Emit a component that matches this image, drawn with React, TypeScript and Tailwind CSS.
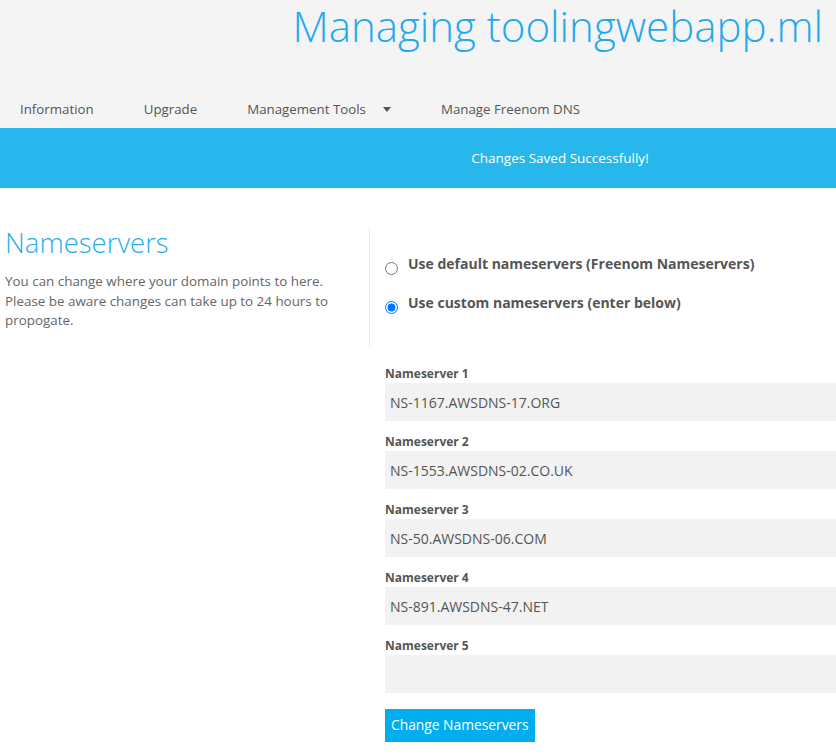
import React from "react";

const fields = [
  { label: "Nameserver 1", value: "NS-1167.AWSDNS-17.ORG" },
  { label: "Nameserver 2", value: "NS-1553.AWSDNS-02.CO.UK" },
  { label: "Nameserver 3", value: "NS-50.AWSDNS-06.COM" },
  { label: "Nameserver 4", value: "NS-891.AWSDNS-47.NET" },
  { label: "Nameserver 5", value: "" },
];

export default function App() {
  return (
    <div className="min-h-[756px] bg-white font-['Open_Sans',sans-serif] text-[#555]">
      <header className="bg-[#f4f4f4] h-[128px] overflow-hidden">
        <h1 className="text-right pr-[13px] text-[42px] leading-[52px] font-light text-[#1fa9ef]">
          Managing toolingwebapp.ml
        </h1>
        <nav className="mt-[39px] h-[37px] flex items-center pl-[20px] gap-[50px] text-[13.3px] text-[#555]">
          <span>Information</span>
          <span>Upgrade</span>
          <span className="flex items-center">
            Management Tools
            <svg className="ml-[17px]" width="8" height="5" viewBox="0 0 8 5">
              <path d="M0 0 L8 0 L4 5 Z" fill="#555" />
            </svg>
          </span>
          <span>Manage Freenom DNS</span>
        </nav>
      </header>
      <div className="h-[60px] bg-[#27b7ed] flex items-center justify-center pl-[284px] text-white text-[13.5px]">
        Changes Saved Successfully!
      </div>
      <div className="flex mt-[35px]">
        <div className="w-[369px] shrink-0 pl-[5px] pr-[10px]">
          <h2 className="text-[27.5px] leading-[40px] font-light text-[#29aee8]">Nameservers</h2>
          <p className="mt-[9px] text-[13.4px] leading-[19.5px] text-[#666]">
            You can change where your domain points to here. Please be aware changes can take up to 24 hours to propogate.
          </p>
        </div>
        <div className="flex-1 mt-[5px]">
          <div className="border-l border-[#eaeaea] pl-[15px] pt-[26px] pb-[33px] flex flex-col gap-[18px]">
            <label className="flex items-start gap-[10px] text-[14px] leading-[20px] font-bold text-[#555]">
              <input type="radio" name="ns" className="mt-[8px] m-0 w-[13px] h-[13px]" />
              Use default nameservers (Freenom Nameservers)
            </label>
            <label className="flex items-start gap-[10px] text-[14px] leading-[20px] font-bold text-[#555]">
              <input type="radio" name="ns" defaultChecked className="mt-[8px] m-0 w-[13px] h-[13px]" />
              Use custom nameservers (enter below)
            </label>
          </div>
          <div className="pl-[16px] pt-[18px]">
            {fields.map((f) => (
              <div key={f.label} className="mb-[12px]">
                <div className="text-[12px] leading-[17px] font-bold text-[#555]">{f.label}</div>
                <input
                  readOnly
                  value={f.value}
                  className="mt-[1px] block w-full h-[38px] bg-[#f2f2f2] pl-[5px] text-[14px] text-[#555] outline-none border-0"
                />
              </div>
            ))}
            <button className="mt-[4px] h-[33px] px-[6px] bg-[#00aeef] text-white text-[13.8px]">
              Change Nameservers
            </button>
          </div>
        </div>
      </div>
    </div>
  );
}
